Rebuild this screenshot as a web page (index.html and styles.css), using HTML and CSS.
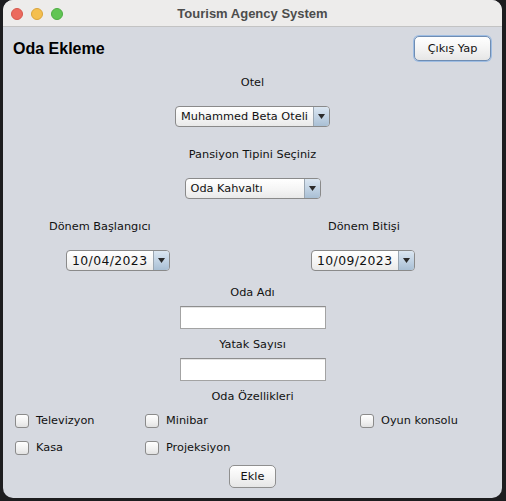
FILE: index.html
```html
<!DOCTYPE html>
<html lang="tr">
<head>
<meta charset="utf-8">
<title>Tourism Agency System</title>
<link rel="stylesheet" href="styles.css">
</head>
<body>
<div class="window">
  <div class="titlebar">
    <div class="lights">
      <span class="light red"></span>
      <span class="light yellow"></span>
      <span class="light green"></span>
    </div>
    <div class="title">Tourism Agency System</div>
    <div></div>
  </div>
  <div class="content">
    <div class="header">
      <h1 class="heading">Oda Ekleme</h1>
      <button class="btn btn-focus">Çıkış Yap</button>
    </div>

    <div class="label l-otel">Otel</div>
    <div class="combo combo-hotel">
      <span class="combo-text">Muhammed Beta Oteli</span>
      <span class="combo-arrow"><svg width="7" height="5" viewBox="0 0 7 5"><path d="M0 0H7L3.5 5Z" fill="#2b2b2b"/></svg></span>
    </div>

    <div class="label l-pension">Pansiyon Tipini Seçiniz</div>
    <div class="combo combo-pension">
      <span class="combo-text">Oda Kahvaltı</span>
      <span class="combo-arrow"><svg width="7" height="5" viewBox="0 0 7 5"><path d="M0 0H7L3.5 5Z" fill="#2b2b2b"/></svg></span>
    </div>

    <div class="period-labels">
      <div class="label">Dönem Başlangıcı</div>
      <div class="label">Dönem Bitişi</div>
    </div>
    <div class="period-dates">
      <div class="combo combo-date">
        <span class="combo-text date-text">10/04/2023</span>
        <span class="combo-arrow"><svg width="7" height="5" viewBox="0 0 7 5"><path d="M0 0H7L3.5 5Z" fill="#2b2b2b"/></svg></span>
      </div>
      <div class="combo combo-date">
        <span class="combo-text date-text">10/09/2023</span>
        <span class="combo-arrow"><svg width="7" height="5" viewBox="0 0 7 5"><path d="M0 0H7L3.5 5Z" fill="#2b2b2b"/></svg></span>
      </div>
    </div>

    <div class="label l-name">Oda Adı</div>
    <input class="field" type="text">

    <div class="label l-beds">Yatak Sayısı</div>
    <input class="field" type="text">

    <div class="label l-features">Oda Özellikleri</div>
    <div class="features">
      <label class="check"><span class="box"></span>Televizyon</label>
      <label class="check"><span class="box"></span>Minibar</label>
      <label class="check"><span class="box"></span>Oyun konsolu</label>
      <label class="check"><span class="box"></span>Kasa</label>
      <label class="check"><span class="box"></span>Projeksiyon</label>
    </div>

    <button class="btn btn-add">Ekle</button>
  </div>
</div>
</body>
</html>
```

FILE: styles.css
```css
html, body {
  margin: 0;
  padding: 0;
}
body {
  background: #1d1d1f;
  width: 506px;
  height: 501px;
  overflow: hidden;
  font-family: "DejaVu Sans", sans-serif;
  font-size: 11.3px;
  color: #111;
}
.window {
  margin-left: 3px;
  width: 499px;
  height: 498px;
  border-radius: 10px;
  overflow: hidden;
  background: #d6d9e0;
  display: flex;
  flex-direction: column;
}
.titlebar {
  height: 26px;
  border-bottom: 1px solid #c3c3c3;
  background: #edeceb;
  display: grid;
  grid-template-columns: 1fr auto 1fr;
  align-items: center;
}
.lights {
  display: flex;
  gap: 8px;
  padding-left: 8px;
  margin-top: 1px;
}
.light {
  width: 12px;
  height: 12px;
  border-radius: 50%;
  box-sizing: border-box;
}
.red { background: #ec6a5e; border: 0.5px solid #d5574c; }
.yellow { background: #f4bf4f; border: 0.5px solid #d9a43b; }
.green { background: #61c554; border: 0.5px solid #4ead43; }
.title {
  font-family: "Liberation Sans", Arial, sans-serif;
  font-weight: bold;
  font-size: 13px;
  color: #4c4c4c;
  margin-top: 1px;
}
.content {
  display: flex;
  flex-direction: column;
  align-items: center;
}
.header {
  align-self: stretch;
  display: flex;
  justify-content: space-between;
  align-items: center;
  padding: 9px 11px 0 10px;
}
.heading {
  margin: 0;
  font-family: "Liberation Sans", Arial, sans-serif;
  font-weight: bold;
  font-size: 16px;
  color: #000;
  padding-top: 1px;
}
.btn {
  font-family: "DejaVu Sans", sans-serif;
  font-size: 11.3px;
  color: #111;
  background: linear-gradient(#ffffff, #f4f4f4 50%, #e6e6e6);
  border: 1px solid #8f8f8f;
  border-radius: 5px;
  padding: 0;
  box-sizing: border-box;
}
.btn-focus {
  width: 77px;
  height: 25px;
  border: 1px solid #6f8db3;
  box-shadow: 0 0 0 1px #9ebde3;
}
.label {
  line-height: 16px;
  padding-top: 2px;
  white-space: nowrap;
}
.l-otel { margin-top: 12px; }
.combo {
  display: flex;
  align-items: stretch;
  height: 21px;
  box-sizing: border-box;
  border: 1px solid #8a8a8a;
  border-radius: 4px;
  background: linear-gradient(#ffffff, #f5f5f5 55%, #e9e9e9);
  overflow: hidden;
}
.combo-text {
  flex: 1;
  padding-left: 5px;
  line-height: 19px;
  white-space: nowrap;
}
.combo-arrow {
  width: 15px;
  border-left: 1px solid #9aa6b2;
  background: linear-gradient(#dbe6f1, #c2d3e4 50%, #a9bfd4);
  display: flex;
  align-items: center;
  justify-content: center;
}
.combo-hotel {
  width: 155px;
  margin-top: 15px;
}
.l-pension { margin-top: 18px; }
.combo-pension {
  width: 136px;
  margin-top: 15px;
}
.period-labels {
  align-self: stretch;
  display: grid;
  grid-template-columns: 279px 1fr;
  padding-left: 46px;
  margin-top: 18px;
}
.period-dates {
  align-self: stretch;
  display: grid;
  grid-template-columns: 245px 1fr;
  padding-left: 63px;
  margin-top: 15px;
}
.combo-date {
  width: 104px;
}
.date-text {
  font-size: 12.4px;
  letter-spacing: 0.4px;
}
.l-name { margin-top: 12px; }
.field {
  width: 146px;
  height: 23px;
  box-sizing: border-box;
  margin: 5px 0 0 0;
  border: 1px solid #a3a3a3;
  border-top-color: #8e8e8e;
  background: #fff;
  box-shadow: inset 0 1px 0 #e4e4e4;
  padding: 0 4px;
  outline: none;
}
.l-beds { margin-top: 6px; }
.l-features { margin-top: 6px; }
.features {
  align-self: stretch;
  display: grid;
  grid-template-columns: 130px 215px 1fr;
  row-gap: 11px;
  padding-left: 12px;
  margin-top: 8px;
}
.check {
  display: flex;
  align-items: center;
  gap: 7px;
  line-height: 16px;
  white-space: nowrap;
}
.box {
  width: 14px;
  height: 14px;
  box-sizing: border-box;
  border: 1px solid #8b8b8b;
  border-radius: 3px;
  background: linear-gradient(#ffffff, #f0f0f0 60%, #e2e2e2);
}
.btn-add {
  width: 47px;
  height: 23px;
  margin-top: 9px;
}
```
